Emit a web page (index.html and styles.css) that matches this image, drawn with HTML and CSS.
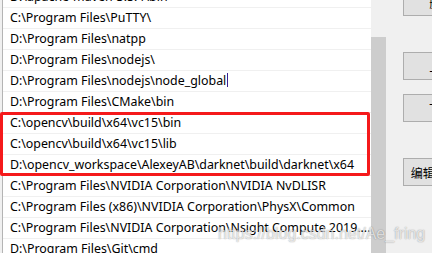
FILE: index.html
```html
<!DOCTYPE html>
<html lang="zh-CN">
<head>
  <meta charset="UTF-8">
  <title>编辑环境变量</title>
  <link rel="stylesheet" href="styles.css">
</head>
<body>

  <div class="dialog">
    <div class="listbox">
      <div class="rows">
        <div class="row">D:\apache-maven-3.5.4\bin</div>
        <div class="row">C:\Program Files\PuTTY\</div>
        <div class="row">D:\Program Files\natpp</div>
        <div class="row">D:\Program Files\nodejs\</div>
        <div class="row">D:\Program Files\nodejs\node_global<span class="caret"></span></div>
        <div class="row">D:\Program Files\CMake\bin</div>
        <div class="row">C:\opencv\build\x64\vc15\bin</div>
        <div class="row">C:\opencv\build\x64\vc15\lib</div>
        <div class="row">D:\opencv_workspace\AlexeyAB\darknet\build\darknet\x64</div>
        <div class="row">C:\Program Files\NVIDIA Corporation\NVIDIA NvDLISR</div>
        <div class="row">C:\Program Files (x86)\NVIDIA Corporation\PhysX\Common</div>
        <div class="row">C:\Program Files\NVIDIA Corporation\Nsight Compute 2019....</div>
        <div class="row">D:\Program Files\Git\cmd</div>
      </div>
      <div class="scrollbar">
        <div class="thumb"></div>
      </div>
    </div>

    <div class="divider"></div>

    <div class="actions">
      <button class="btn btn-delete">删除(D)</button>
      <button class="btn btn-up">上移(U)</button>
      <button class="btn">下移(O)</button>
      <button class="btn btn-text">编辑文本(T)...</button>
    </div>

    <!-- highlight drawn over the opencv entries -->
    <div class="highlight"></div>
    <div class="watermark">https://blog.csdn.net/Ae_fring</div>
  </div>

</body>
</html>
```

FILE: styles.css
```css
body {
  margin: 0;
  background: #f0f0f0;
  font-family: "Noto Sans", "Noto Sans CJK SC", sans-serif;
  overflow: hidden;
}

.dialog {
  position: relative;
  display: flex;
  height: 253px;
  overflow: hidden;
}

.listbox {
  display: flex;
  margin-left: 2px;
  width: 389px;
  border-left: 1px solid #b4b4b4;
  background: #fff;
}

.rows {
  flex: 1;
  margin-top: -13px;
}

.row {
  height: 20px;
  line-height: 20px;
  border-bottom: 1px solid #f0f0f0;
  padding-left: 7px;
  font-size: 12.4px;
  color: #000;
  white-space: nowrap;
}

.caret {
  display: inline-block;
  width: 1px;
  height: 14px;
  margin-left: 1px;
  vertical-align: -2px;
  background: #3a2090;
}

.scrollbar {
  width: 15px;
  background: #f0f0f0;
  display: flex;
  flex-direction: column;
}

.thumb {
  margin-top: 37px;
  flex: 1;
  background: #cdcdcd;
}

.divider {
  width: 1px;
  margin-left: 2px;
  background: #a0a0a0;
}

.actions {
  display: flex;
  flex-direction: column;
  padding-left: 15px;
  flex-shrink: 0;
}

.btn {
  width: 94px;
  height: 28px;
  margin-top: 14px;
  padding: 0;
  border: 1px solid #adadad;
  background: #e1e1e1;
  font-family: "Noto Sans CJK SC", sans-serif;
  font-size: 12px;
  color: #000;
  white-space: nowrap;
  text-align: center;
}

.btn-delete {
  margin-top: -12px;
}

.btn-up {
  margin-top: 36px;
}

.btn-text {
  margin-top: 36px;
  text-indent: -4px;
}

.highlight {
  position: absolute;
  left: 0;
  top: 112px;
  width: 364px;
  height: 58px;
  border: 3px solid #f5191b;
  border-radius: 2px;
}

.watermark {
  position: absolute;
  left: 218px;
  top: 225px;
  font-family: "Liberation Sans", Arial, sans-serif;
  font-size: 16px;
  color: rgba(255, 255, 255, 0.7);
  text-shadow: 0 0 1px rgba(0, 0, 0, 0.3), 0 0 2px rgba(0, 0, 0, 0.15);
}
```
